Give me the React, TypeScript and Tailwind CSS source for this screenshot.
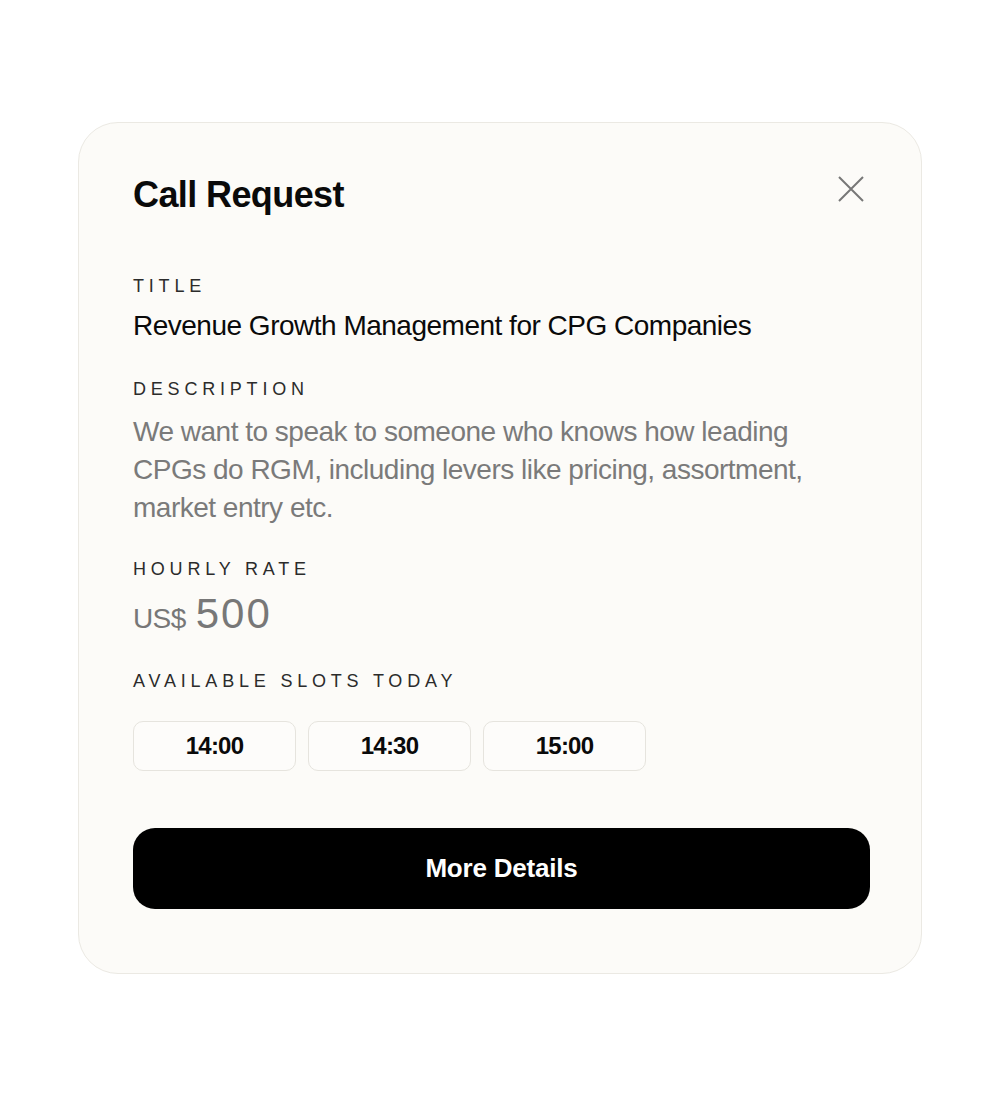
import React from "react";

const font = { fontFamily: '"Liberation Sans", Arial, sans-serif' };

function Label({ children, className = "" }: { children: React.ReactNode; className?: string }) {
  return (
    <div className={`text-[18px] leading-[24px] tracking-[4.8px] text-[#2b2b2b] uppercase ${className}`}>
      {children}
    </div>
  );
}

export default function App() {
  return (
    <div className="w-[1000px] h-[1099px] bg-white pt-[122px]" style={font}>
      <div className="mx-auto w-[844px] h-[852px] rounded-[40px] border border-[#ebe9e3] bg-[#fcfbf8] pt-[50px] pl-[54px] pr-[51px]">
        <div className="flex items-start justify-between">
          <h1 className="text-[36px] leading-[44px] font-bold tracking-[-0.6px] text-[#0a0a0a]">Call Request</h1>
          <button className="mt-[3px] mr-[6px] w-[26px] h-[26px]" aria-label="Close">
            <svg width="26" height="26" viewBox="0 0 26 26" fill="none">
              <path d="M1 1L25 25M25 1L1 25" stroke="#777777" strokeWidth="2" />
            </svg>
          </button>
        </div>

        <Label className="mt-[57px]">Title</Label>
        <div className="mt-[10px] text-[28px] leading-[36px] tracking-[-0.5px] text-[#0a0a0a]">
          Revenue Growth Management for CPG Companies
        </div>

        <Label className="mt-[33px]">Description</Label>
        <p className="mt-[12px] max-w-[700px] text-[28px] leading-[38px] tracking-[-0.5px] text-[#7a7a7a]">
          We want to speak to someone who knows how leading CPGs do RGM, including levers like pricing, assortment,
          market entry etc.
        </p>

        <Label className="mt-[30px]">Hourly Rate</Label>
        <div className="mt-[11px] flex items-baseline gap-[10px] h-[44px] leading-[44px] text-[#777777]">
          <span className="text-[28px] tracking-[-0.6px]">US$</span>
          <span className="text-[42px] tracking-[2px]">500</span>
        </div>

        <Label className="mt-[33px]">Available Slots Today</Label>
        <div className="mt-[28px] flex gap-[12px]">
          {["14:00", "14:30", "15:00"].map((t) => (
            <div
              key={t}
              className="w-[163px] h-[50px] rounded-[10px] border border-[#e6e4de] bg-[#fdfcfa] flex items-center justify-center text-[24px] font-bold tracking-[-0.8px] text-[#0a0a0a]"
            >
              {t}
            </div>
          ))}
        </div>

        <button className="mt-[57px] w-[737px] h-[81px] rounded-[22px] bg-black text-white text-[26px] font-bold tracking-[-0.2px] flex items-center justify-center">
          More Details
        </button>
      </div>
    </div>
  );
}
